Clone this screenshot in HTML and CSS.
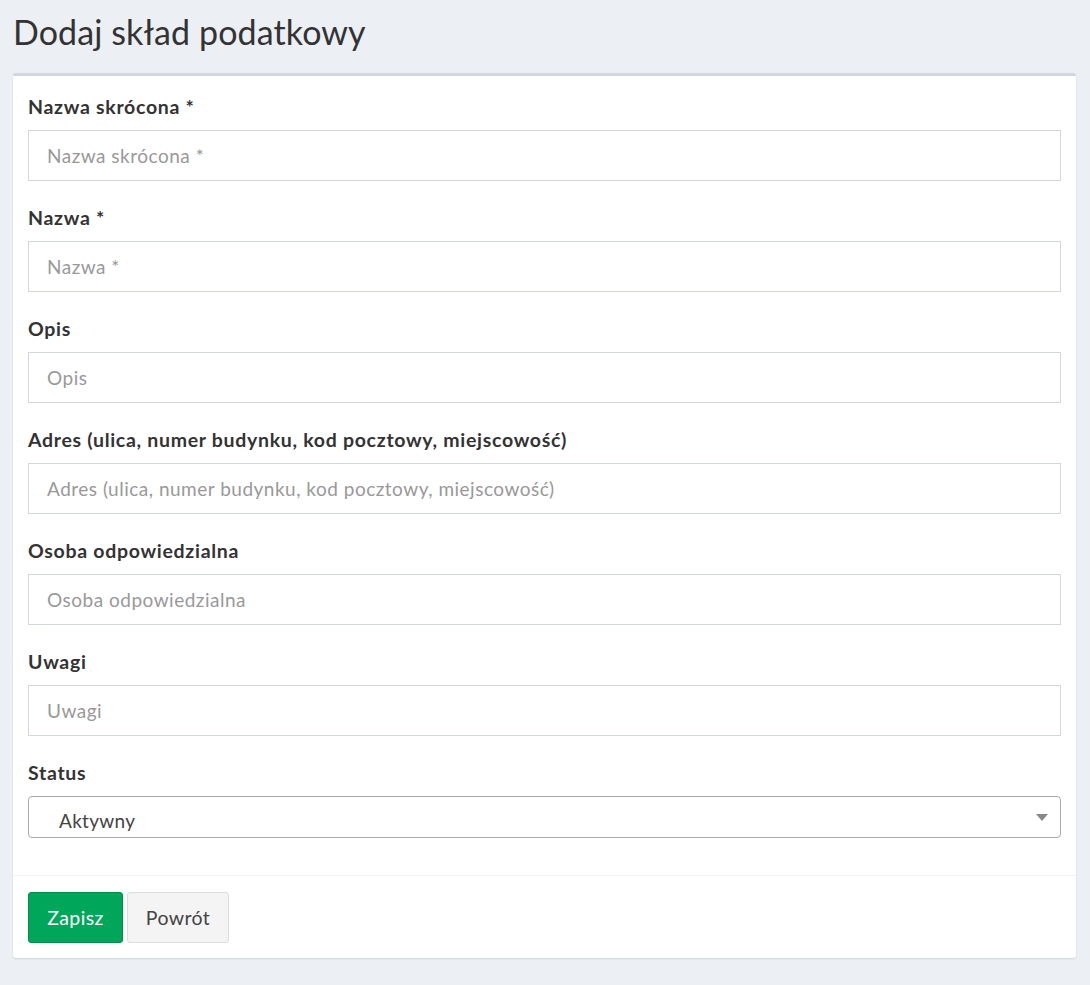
FILE: index.html
```html
<!DOCTYPE html>
<html lang="pl">
<head>
<meta charset="utf-8">
<title>Dodaj skład podatkowy</title>
<link rel="stylesheet" href="styles.css">
</head>
<body>
<h1 class="page-title">Dodaj skład podatkowy</h1>
<div class="card">
  <form class="card-body">
    <div class="group">
      <label class="label">Nazwa skrócona *</label>
      <input class="input" type="text" placeholder="Nazwa skrócona *">
    </div>
    <div class="group">
      <label class="label">Nazwa *</label>
      <input class="input" type="text" placeholder="Nazwa *">
    </div>
    <div class="group">
      <label class="label">Opis</label>
      <input class="input" type="text" placeholder="Opis">
    </div>
    <div class="group">
      <label class="label">Adres (ulica, numer budynku, kod pocztowy, miejscowość)</label>
      <input class="input" type="text" placeholder="Adres (ulica, numer budynku, kod pocztowy, miejscowość)">
    </div>
    <div class="group">
      <label class="label">Osoba odpowiedzialna</label>
      <input class="input" type="text" placeholder="Osoba odpowiedzialna">
    </div>
    <div class="group">
      <label class="label">Uwagi</label>
      <input class="input" type="text" placeholder="Uwagi">
    </div>
    <div class="group">
      <label class="label">Status</label>
      <div class="select">
        <span class="select-text">Aktywny</span>
        <span class="select-arrow"></span>
      </div>
    </div>
  </form>
  <div class="card-footer">
    <button class="btn btn-success" type="button">Zapisz</button>
    <button class="btn btn-default" type="button">Powrót</button>
  </div>
</div>
</body>
</html>
```
FILE: styles.css
```css
* { box-sizing: border-box; }
html, body { margin: 0; padding: 0; }
body {
  background: #ecf0f5;
  font-family: Lato, "Open Sans", sans-serif;
  color: #333;
  padding: 0 14px 0 13px;
  height: 985px;
}
.page-title {
  margin: 0;
  padding: 12px 0 0 0;
  height: 73px;
  font-size: 34px;
  font-weight: 400;
  line-height: 40px;
  letter-spacing: 0.1px;
  color: #333;
}
.card {
  background: #fff;
  border-top: 3px solid #d2d6de;
  border-radius: 3px;
  box-shadow: 0 1px 2px rgba(0,0,0,0.12);
}
.card-body {
  display: flex;
  flex-direction: column;
  padding: 18px 15px 13px 15px;
  margin: 0;
}
.group {
  display: flex;
  flex-direction: column;
  margin-bottom: 24px;
}
.label {
  font-size: 19.5px;
  font-weight: 700;
  line-height: 26px;
  letter-spacing: 0.7px;
  margin-bottom: 10px;
  color: #333;
}
.input {
  height: 51px;
  border: 1px solid #d2d6de;
  border-radius: 0;
  padding: 0 18px;
  font-family: inherit;
  font-size: 19px;
  letter-spacing: 0.5px;
  color: #555;
  outline: none;
}
.input::placeholder { color: #999; }
.select {
  height: 42px;
  border: 1px solid #aaa;
  border-radius: 4px;
  display: flex;
  align-items: center;
  justify-content: space-between;
  padding: 6px 12px 0 30px;
}
.select-text {
  font-size: 19px;
  letter-spacing: 0.3px;
  color: #444;
}
.select-arrow {
  width: 0;
  height: 0;
  border-left: 6px solid transparent;
  border-right: 6px solid transparent;
  border-top: 7px solid #888;
  margin-top: -6px;
}
.card-footer {
  border-top: 1px solid #f4f4f4;
  padding: 16px 15px 15px 15px;
  display: flex;
  gap: 4px;
}
.btn {
  height: 51px;
  border-radius: 3px;
  font-family: inherit;
  font-size: 19.5px;
  letter-spacing: 0.4px;
  padding: 0;
  cursor: pointer;
}
.btn-success {
  background: #00a65a;
  border: 1px solid #008d4c;
  color: #fff;
  width: 95px;
}
.btn-default {
  background: #f4f4f4;
  border: 1px solid #ddd;
  color: #444;
  width: 102px;
}
```
